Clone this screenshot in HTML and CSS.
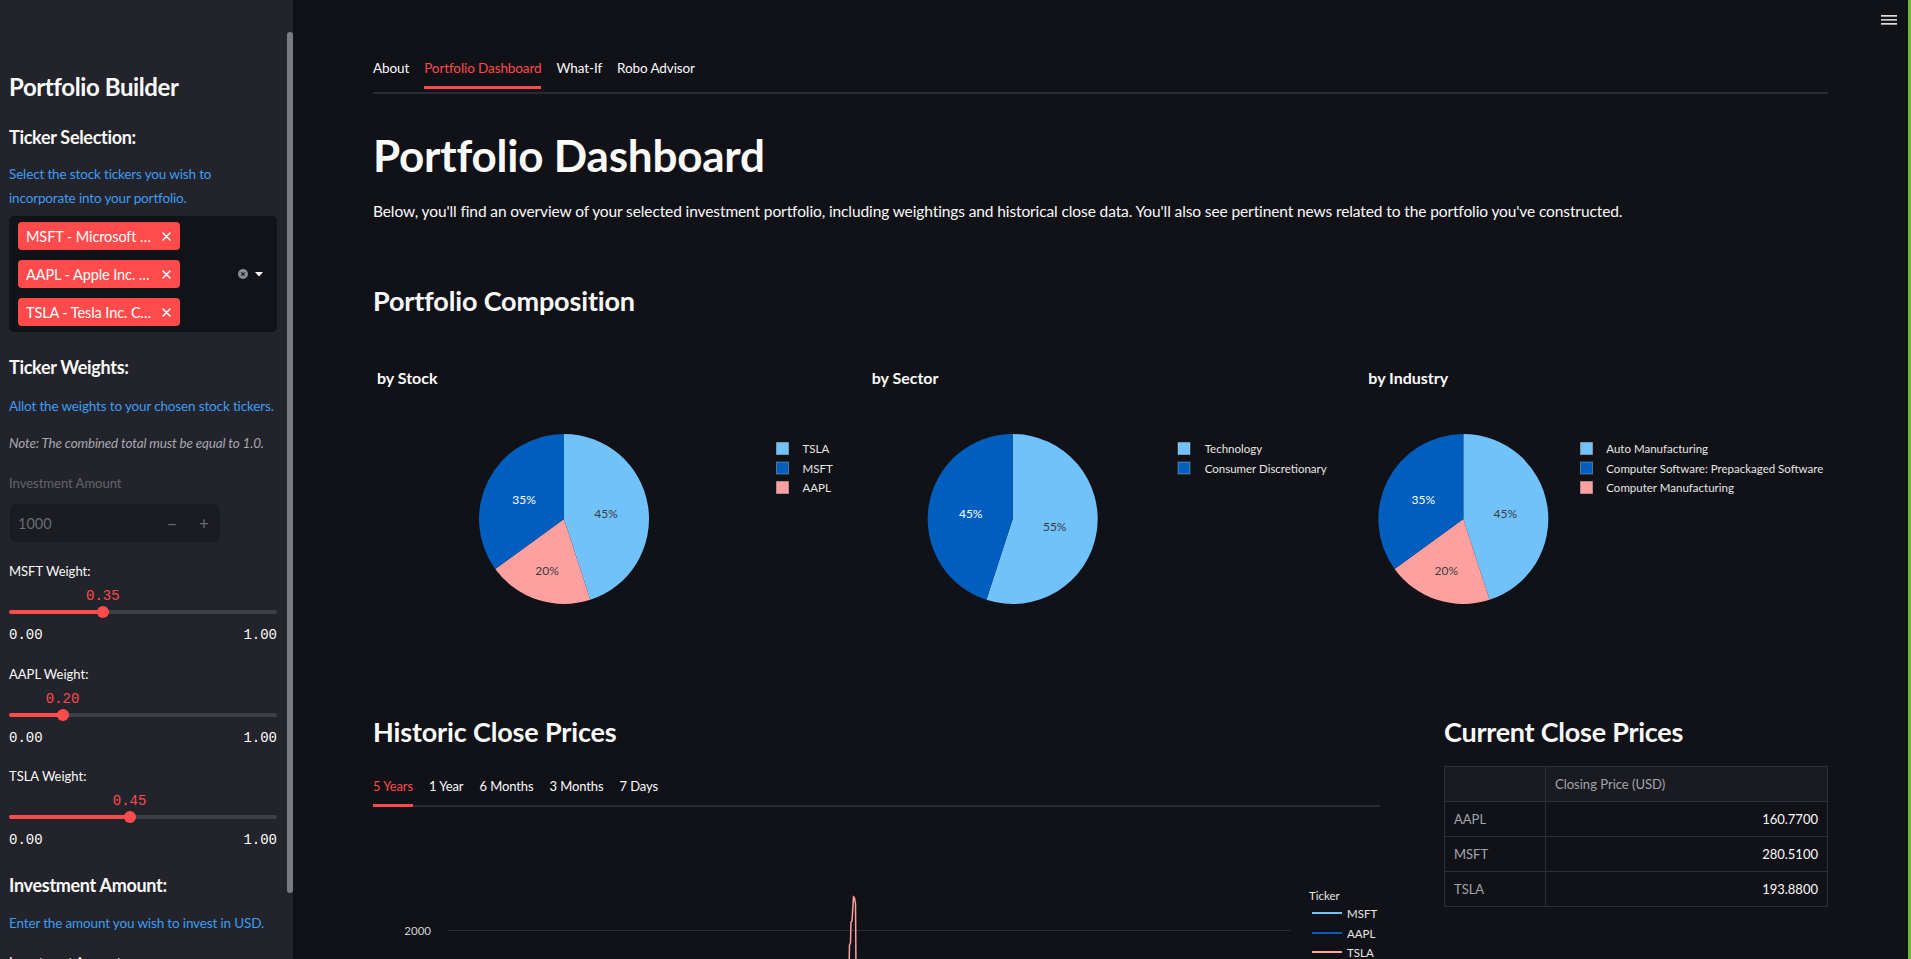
FILE: index.html
```html
<!DOCTYPE html>
<html lang="en">
<head>
<meta charset="utf-8">
<title>Portfolio Dashboard</title>
<link rel="stylesheet" href="styles.css">
</head>
<body>
<div class="app">
  <aside class="sidebar">
    <div class="sb-content">
      <h2 class="sb-title">Portfolio Builder</h2>
      <h3 class="sb-h3 h-ticker">Ticker Selection:</h3>
      <p class="sb-blue blue-select">Select the stock tickers you wish to<br>incorporate into your portfolio.</p>
      <div class="multiselect">
        <div class="tags">
          <span class="tag"><span class="tag-text">MSFT - Microsoft Corporation</span><svg class="tag-x" viewBox="0 0 9 9"><path d="M1 1L8 8M8 1L1 8" stroke="#fff" stroke-width="1.5" stroke-linecap="round"/></svg></span>
          <span class="tag"><span class="tag-text">AAPL - Apple Inc. Common Stock</span><svg class="tag-x" viewBox="0 0 9 9"><path d="M1 1L8 8M8 1L1 8" stroke="#fff" stroke-width="1.5" stroke-linecap="round"/></svg></span>
          <span class="tag"><span class="tag-text">TSLA - Tesla Inc. Common Stock</span><svg class="tag-x" viewBox="0 0 9 9"><path d="M1 1L8 8M8 1L1 8" stroke="#fff" stroke-width="1.5" stroke-linecap="round"/></svg></span>
        </div>
        <div class="ms-icons">
          <svg width="10" height="10" viewBox="0 0 10 10"><circle cx="5" cy="5" r="5" fill="#8a8b93"/><path d="M3.3 3.3L6.7 6.7M6.7 3.3L3.3 6.7" stroke="#1b1c22" stroke-width="1.2"/></svg>
          <svg width="8" height="5" viewBox="0 0 8 5"><path d="M0 0H8L4 4.5Z" fill="#fafafa"/></svg>
        </div>
      </div>
      <h3 class="sb-h3 h-weights">Ticker Weights:</h3>
      <p class="sb-blue blue-allot">Allot the weights to your chosen stock tickers.</p>
      <p class="sb-note">Note: The combined total must be equal to 1.0.</p>
      <div class="sb-label disabled">Investment Amount</div>
      <div class="numinput">
        <span class="num-val">1000</span>
        <span class="num-btn">−</span>
        <span class="num-btn">+</span>
      </div>

      <div class="weight first">
        <div class="wlabel">MSFT Weight:</div>
        <div class="s-value-row"><span class="s-value" style="left:35%">0.35</span></div>
        <div class="s-track"><div class="s-fill" style="width:35%"></div><div class="s-thumb" style="left:35%"></div></div>
        <div class="s-minmax"><span>0.00</span><span>1.00</span></div>
      </div>
      <div class="weight">
        <div class="wlabel">AAPL Weight:</div>
        <div class="s-value-row"><span class="s-value" style="left:20%">0.20</span></div>
        <div class="s-track"><div class="s-fill" style="width:20%"></div><div class="s-thumb" style="left:20%"></div></div>
        <div class="s-minmax"><span>0.00</span><span>1.00</span></div>
      </div>
      <div class="weight">
        <div class="wlabel">TSLA Weight:</div>
        <div class="s-value-row"><span class="s-value" style="left:45%">0.45</span></div>
        <div class="s-track"><div class="s-fill" style="width:45%"></div><div class="s-thumb" style="left:45%"></div></div>
        <div class="s-minmax"><span>0.00</span><span>1.00</span></div>
      </div>

      <h3 class="sb-h3 h-invest">Investment Amount:</h3>
      <p class="sb-blue blue-enter">Enter the amount you wish to invest in USD.</p>
      <div class="sb-label last-label">Investment Amount</div>
    </div>
    <div class="sb-scroll"></div>
  </aside>

  <main class="main">
    <div class="menu-btn">
      <svg width="16" height="10" viewBox="0 0 16 10"><rect x="0" y="0" width="16" height="1.7" fill="#dedede"/><rect x="0" y="4" width="16" height="1.7" fill="#c8c8c8"/><rect x="0" y="8" width="16" height="1.7" fill="#dedede"/></svg>
    </div>
    <div class="container">
      <nav class="tabs top-tabs">
        <span class="tab">About</span>
        <span class="tab active">Portfolio Dashboard</span>
        <span class="tab">What-If</span>
        <span class="tab">Robo Advisor</span>
      </nav>
      <h1 class="page-title">Portfolio Dashboard</h1>
      <p class="intro">Below, you'll find an overview of your selected investment portfolio, including weightings and historical close data. You'll also see pertinent news related to the portfolio you've constructed.</p>
      <h3 class="section-title comp-title">Portfolio Composition</h3>

      <div class="pies">
        <svg class="pie-chart" width="474" height="320" viewBox="0 0 474 320">
          <text class="chart-title" x="4" y="37">by Stock</text>
          <path d="M191,179 L191,94 A85,85 0 0 1 217.27,259.84 Z" fill="#71c1fb"/>
          <path d="M191,179 L217.27,259.84 A85,85 0 0 1 122.23,228.96 Z" fill="#ffa0a0"/>
          <path d="M191,179 L122.23,228.96 A85,85 0 0 1 191,94 Z" fill="#005fbe"/>
          <text class="pie-label dark" x="233" y="173">45%</text>
          <text class="pie-label light" x="151" y="159">35%</text>
          <text class="pie-label dark" x="174" y="230">20%</text>
          <rect class="swatch" x="403.5" y="102.5" width="12" height="12" fill="#71c1fb"/>
          <rect class="swatch" x="403.5" y="122" width="12" height="12" fill="#005fbe"/>
          <rect class="swatch" x="403.5" y="141.5" width="12" height="12" fill="#ffa0a0"/>
          <text class="legend-text" x="429.5" y="108.5">TSLA</text>
          <text class="legend-text" x="429.5" y="128">MSFT</text>
          <text class="legend-text" x="429.5" y="147.5">AAPL</text>
        </svg>
        <svg class="pie-chart" width="474" height="320" viewBox="0 0 474 320">
          <text class="chart-title" x="8.7" y="37">by Sector</text>
          <path d="M149.67,179 L149.67,94 A85,85 0 1 1 123.4,259.84 Z" fill="#71c1fb"/>
          <path d="M149.67,179 L123.4,259.84 A85,85 0 0 1 149.67,94 Z" fill="#005fbe"/>
          <text class="pie-label light" x="107.7" y="173">45%</text>
          <text class="pie-label dark" x="191.7" y="186">55%</text>
          <rect class="swatch" x="315" y="102.5" width="12" height="12" fill="#71c1fb"/>
          <rect class="swatch" x="315" y="122" width="12" height="12" fill="#005fbe"/>
          <text class="legend-text" x="341.7" y="108.5">Technology</text>
          <text class="legend-text" x="341.7" y="128">Consumer Discretionary</text>
        </svg>
        <svg class="pie-chart" width="474" height="320" viewBox="0 0 474 320">
          <text class="chart-title" x="14.3" y="37">by Industry</text>
          <path d="M109.33,179 L109.33,94 A85,85 0 0 1 135.6,259.84 Z" fill="#71c1fb"/>
          <path d="M109.33,179 L135.6,259.84 A85,85 0 0 1 40.56,228.96 Z" fill="#ffa0a0"/>
          <path d="M109.33,179 L40.56,228.96 A85,85 0 0 1 109.33,94 Z" fill="#005fbe"/>
          <text class="pie-label light" x="69.3" y="159">35%</text>
          <text class="pie-label dark" x="151.3" y="173">45%</text>
          <text class="pie-label dark" x="92.3" y="230">20%</text>
          <rect class="swatch" x="226.5" y="102.5" width="12" height="12" fill="#71c1fb"/>
          <rect class="swatch" x="226.5" y="122" width="12" height="12" fill="#005fbe"/>
          <rect class="swatch" x="226.5" y="141.5" width="12" height="12" fill="#ffa0a0"/>
          <text class="legend-text" x="252.3" y="108.5">Auto Manufacturing</text>
          <text class="legend-text" x="252.3" y="128">Computer Software: Prepackaged Software</text>
          <text class="legend-text" x="252.3" y="147.5">Computer Manufacturing</text>
        </svg>
      </div>

      <div class="bottom-row">
        <div class="hist">
          <h3 class="section-title">Historic Close Prices</h3>
          <nav class="tabs small-tabs">
            <span class="tab active">5 Years</span>
            <span class="tab">1 Year</span>
            <span class="tab">6 Months</span>
            <span class="tab">3 Months</span>
            <span class="tab">7 Days</span>
          </nav>
          <svg class="line-chart" width="1007" height="200" viewBox="0 0 1007 200">
            <line x1="75" y1="110.5" x2="917" y2="110.5" stroke="#2c2d34" stroke-width="1"/>
            <text class="axis-text" x="58" y="110.5" text-anchor="end">2000</text>
            <path d="M476,150 L476.5,125 L477.5,123 L478,102 L479,101 L480.5,77 L481.5,78 L482.5,84 L483,150" fill="none" stroke="#ffa0a0" stroke-width="1.5"/>
            <text class="legend-text" x="936" y="75">Ticker</text>
            <line x1="939" y1="93" x2="969" y2="93" stroke="#71c1fb" stroke-width="2"/>
            <line x1="939" y1="113" x2="969" y2="113" stroke="#005fbe" stroke-width="2"/>
            <line x1="939" y1="132" x2="969" y2="132" stroke="#ffa0a0" stroke-width="2"/>
            <text class="legend-text" x="974" y="93">MSFT</text>
            <text class="legend-text" x="974" y="113">AAPL</text>
            <text class="legend-text" x="974" y="132">TSLA</text>
          </svg>
        </div>
        <div class="current">
          <h3 class="section-title cur-title">Current Close Prices</h3>
          <table class="price-table">
            <thead><tr><th class="idx"></th><th>Closing Price (USD)</th></tr></thead>
            <tbody>
              <tr><th class="idx">AAPL</th><td>160.7700</td></tr>
              <tr><th class="idx">MSFT</th><td>280.5100</td></tr>
              <tr><th class="idx">TSLA</th><td>193.8800</td></tr>
            </tbody>
          </table>
        </div>
      </div>
    </div>
    <div class="green-strip"></div>
  </main>
</div>
</body>
</html>
```

FILE: styles.css
```css
* { box-sizing: border-box; margin: 0; padding: 0; }
html, body { height: 100%; overflow: hidden; background: #111217; }
body { font-family: "Source Sans Pro", Lato, "Liberation Sans", sans-serif; color: #fafafa; }

.app { display: flex; height: 100%; }

/* Sidebar */
.sidebar { width: 293px; flex: none; background: #23242b; position: relative; overflow: hidden; }
.sb-content { padding: 71px 16px 0 9px; }
.sb-title { font-size: 24px; line-height: 32px; font-weight: 700; letter-spacing: -0.4px; }
.sb-h3 { font-size: 18px; line-height: 28px; font-weight: 700; letter-spacing: -0.3px; }
.h-ticker { margin-top: 20px; }
.h-weights { margin-top: 21px; }
.h-invest { margin-top: 2.5px; }
.sb-blue { color: #3d9df3; font-size: 13.5px; line-height: 24px; letter-spacing: -0.15px; }
.blue-select { margin-top: 11px; }
.blue-allot { margin-top: 13px; }
.blue-enter { margin-top: 12px; }
.sb-note { margin-top: 13px; font-size: 13.5px; line-height: 24px; letter-spacing: -0.17px; font-style: italic; color: #a6a6ae; }
.sb-label { font-size: 13px; line-height: 20px; color: #fafafa; }
.sb-label.disabled { margin-top: 18px; color: #63646c; }
.last-label { margin-top: 17px; }

.multiselect { margin-top: 6px; height: 116px; background: #121318; border-radius: 5px; display: flex; align-items: center; padding: 0 14px 0 9px; }
.tags { display: flex; flex-direction: column; gap: 10px; }
.tag { display: flex; align-items: center; width: 162px; height: 28px; background: #ff4b4b; border-radius: 4px; padding: 0 9px 0 8px; gap: 8px; }
.tag-text { flex: 1; min-width: 0; overflow: hidden; white-space: nowrap; text-overflow: ellipsis; font-size: 14.5px; letter-spacing: -0.1px; color: #fff; }
.tag-x { width: 9px; height: 9px; flex: none; }
.ms-icons { margin-left: auto; display: flex; align-items: center; gap: 7px; }

.numinput { margin: 11px 0 0 1px; width: 210px; height: 38px; background: #1b1c22; border-radius: 6px; display: flex; align-items: center; padding-left: 8px; color: #6a6b73; }
.num-val { flex: 1; font-size: 14.5px; }
.num-btn { width: 32px; text-align: center; font-size: 17px; }

.weight { height: 102.5px; }
.weight.first { margin-top: 19px; }
.wlabel { font-size: 13px; line-height: 20px; }
.s-value-row { position: relative; height: 20px; margin-top: 5px; }
.s-value { position: absolute; top: 0; transform: translateX(-50%); font: 14px/20px "Liberation Mono", monospace; color: #ff4b4b; }
.s-track { position: relative; height: 4px; margin-top: 4px; background: #3e3f47; border-radius: 2px; }
.s-fill { height: 100%; background: #ff4b4b; border-radius: 2px; }
.s-thumb { position: absolute; top: 50%; width: 12px; height: 12px; margin: -6px 0 0 -6px; border-radius: 50%; background: #ff4b4b; }
.s-minmax { display: flex; justify-content: space-between; margin-top: 11px; font: 14px/20px "Liberation Mono", monospace; color: #fafafa; }

.sb-scroll { position: absolute; right: 0; top: 32px; width: 6px; height: 861px; border-radius: 3px; background: #7a7b80; }

/* Main */
.main { flex: 1; position: relative; overflow: hidden; background: #111217; }
.container { padding: 58px 83px 0 80px; }
.menu-btn { position: absolute; top: 15px; right: 14px; line-height: 0; }
.green-strip { position: absolute; top: 0; right: 0; bottom: 0; width: 3px; background: #6fb43f; }

.tabs { display: flex; gap: 15px; border-bottom: 2px solid #2a2b32; }
.tab { font-size: 13.5px; line-height: 20px; letter-spacing: -0.1px; padding-bottom: 8px; border-bottom: 3px solid transparent; color: #fafafa; white-space: nowrap; }
.tab.active { color: #ff4b4b; border-bottom-color: #ff4b4b; }
.top-tabs { padding-bottom: 3px; }
.small-tabs { margin-top: 26px; gap: 16px; }
.small-tabs .tab { margin-bottom: -2px; font-size: 13px; }

.page-title { margin-top: 33px; font-size: 44px; line-height: 56px; font-weight: 700; letter-spacing: -0.2px; }
.intro { margin-top: 16px; font-size: 15.5px; line-height: 24px; letter-spacing: -0.11px; }
.section-title { font-size: 27px; line-height: 36px; font-weight: 700; letter-spacing: -0.15px; }
.cur-title { letter-spacing: -0.25px; }
.comp-title { margin-top: 60px; }

.pies { margin-top: 21px; display: grid; grid-template-columns: repeat(3, 1fr); gap: 16px; height: 320px; }
.pie-chart { display: block; overflow: visible; }
.chart-title { font-size: 16px; font-weight: 700; fill: #fafafa; dominant-baseline: central; }
.pie-label { font-size: 12px; text-anchor: middle; dominant-baseline: central; }
.pie-label.dark { fill: #3c3c3c; }
.pie-label.light { fill: #ffffff; }
.swatch { stroke: rgba(255,255,255,0.3); stroke-width: 1; }
.legend-text { font-size: 11.5px; fill: #e6e6e6; dominant-baseline: central; }
.axis-text { font-size: 11.5px; fill: #d2d2d2; dominant-baseline: central; }

.bottom-row { margin-top: 54px; display: grid; grid-template-columns: 1007fr 384fr; gap: 64px; }
.line-chart { display: block; margin-top: 13px; }

.price-table { margin-top: 16px; width: 100%; border-collapse: collapse; font-size: 13px; }
.price-table th, .price-table td { height: 35px; border: 1px solid #2e2f36; padding: 0 9px; }
.price-table thead th { background: #1a1b21; color: #a3a4ab; font-weight: 400; text-align: left; }
.price-table tbody th { color: #a3a4ab; font-weight: 400; text-align: left; }
.price-table .idx { width: 101px; }
.price-table td { text-align: right; color: #fafafa; }
```
